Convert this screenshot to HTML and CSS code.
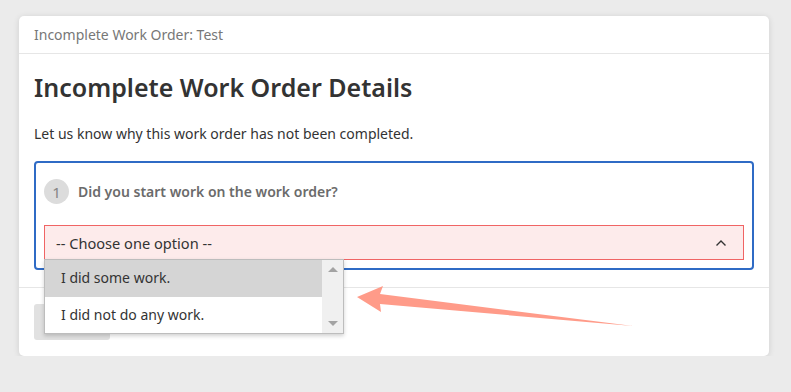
FILE: index.html
```html
<!DOCTYPE html>
<html lang="en">
<head>
    <meta charset="UTF-8">
    <meta name="viewport" content="width=device-width, initial-scale=1.0">
    <title>Incomplete Work Order</title>
    <link rel="stylesheet" href="styles.css">
</head>
<body>
    <div class="card">
        <div class="card-header">Incomplete Work Order: Test</div>
        <div class="card-body">
            <h1>Incomplete Work Order Details</h1>
            <p class="intro">Let us know why this work order has not been completed.</p>

            <div class="question">
                <div class="question-title">
                    <span class="step">1</span>
                    <span class="question-text">Did you start work on the work order?</span>
                </div>
                <div class="select-wrap">
                    <div class="select">
                        <span>-- Choose one option --</span>
                        <svg class="chevron" width="12" height="8" viewBox="0 0 12 8">
                            <path d="M1.5 6.5 L6 2 L10.5 6.5" fill="none" stroke="#333" stroke-width="1.4"/>
                        </svg>
                    </div>
                    <div class="dropdown">
                        <ul class="options">
                            <li class="active">I did some work.</li>
                            <li>I did not do any work.</li>
                        </ul>
                        <div class="scrollbar">
                            <span class="tri-up"></span>
                            <span class="tri-down"></span>
                        </div>
                    </div>
                </div>
            </div>
        </div>
        <div class="card-footer">
            <button type="button" class="btn"></button>
        </div>
    </div>

    <!-- annotation arrow pointing at the open dropdown -->
    <svg class="annotation" width="791" height="392" viewBox="0 0 791 392">
        <polygon points="357,297 383,286 380,294 633,326 380,304 381,312" fill="#ff9b89"/>
    </svg>
</body>
</html>
```

FILE: styles.css
```css
body {
    margin: 0;
    padding: 16px 22px 0 19px;
    background: #ebebeb;
    font-family: 'Noto Sans', 'Open Sans', sans-serif;
    color: #333;
}
.card {
    background: #fff;
    border-radius: 5px;
    box-shadow: 0 1px 6px rgba(0, 0, 0, 0.12);
    width: 750px;
}
.card-header {
    height: 37px;
    line-height: 37px;
    padding: 0 15px;
    font-size: 14px;
    color: #777;
    border-bottom: 1px solid #e6e6e6;
}
.card-body {
    padding: 18px 15px 17px;
}
h1 {
    margin: 0;
    font-size: 25px;
    line-height: 31px;
    font-weight: 600;
    color: #333;
}
.intro {
    margin: 21px 0 17px;
    font-size: 14px;
    line-height: 20px;
}
.question {
    border: 2px solid #2f6bc5;
    border-radius: 4px;
    padding: 16px 8px 8px;
}
.question-title {
    display: flex;
    align-items: center;
    gap: 9px;
    margin-bottom: 21px;
}
.step {
    width: 25px;
    height: 25px;
    border-radius: 50%;
    background: #dcdcdc;
    color: #858585;
    font-size: 15px;
    display: flex;
    align-items: center;
    justify-content: center;
}
.question-text {
    font-size: 14px;
    font-weight: 600;
    color: #6b6b6b;
}
.select-wrap {
    position: relative;
}
.select {
    height: 33px;
    border: 1px solid #f06464;
    background: #fdebeb;
    display: flex;
    align-items: center;
    justify-content: space-between;
    padding: 0 16px 0 11px;
    font-size: 14.6px;
    color: #333;
}
.dropdown {
    position: absolute;
    left: 0;
    top: 34px;
    width: 298px;
    height: 73px;
    display: flex;
    background: #fff;
    border: 1px solid #bdbdbd;
    box-shadow: 0 2px 4px rgba(0, 0, 0, 0.18);
    z-index: 2;
}
.options {
    list-style: none;
    margin: 0;
    padding: 0;
    flex: 1;
}
.options li {
    height: 37px;
    line-height: 36px;
    padding-left: 16px;
    font-size: 14px;
    color: #333;
}
.options li.active {
    background: #d5d5d5;
}
.scrollbar {
    width: 21px;
    background: #f0f0f0;
    display: flex;
    flex-direction: column;
    justify-content: space-between;
    align-items: center;
    padding: 7px 0;
}
.tri-up, .tri-down {
    width: 0;
    height: 0;
    border-left: 5px solid transparent;
    border-right: 5px solid transparent;
}
.tri-up {
    border-bottom: 5px solid #a3a3a3;
}
.tri-down {
    border-top: 5px solid #a3a3a3;
}
.card-footer {
    border-top: 1px solid #e6e6e6;
    padding: 16px 15px;
}
.btn {
    display: block;
    width: 76px;
    height: 36px;
    border: none;
    border-radius: 3px;
    background: #e1e1e1;
}
.annotation {
    position: absolute;
    left: 0;
    top: 0;
    pointer-events: none;
}
```
